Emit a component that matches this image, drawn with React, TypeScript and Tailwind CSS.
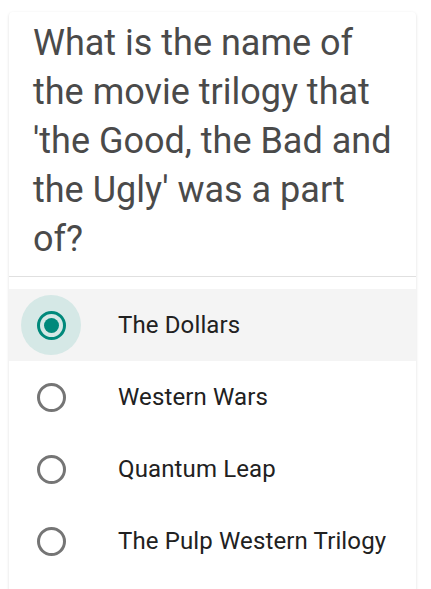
const options = ["The Dollars", "Western Wars", "Quantum Leap", "The Pulp Western Trilogy"];
const selected = 0;

function Radio({ checked }: { checked: boolean }) {
  return (
    <div
      className={`flex h-[60px] w-[60px] shrink-0 items-center justify-center rounded-full ${
        checked ? "bg-[#d5e8e6]" : ""
      }`}
    >
      <div
        className={`flex h-[29px] w-[29px] items-center justify-center rounded-full border-[3px] ${
          checked ? "border-[#00897b]" : "border-[#757575]"
        }`}
      >
        {checked && <div className="h-[15px] w-[15px] rounded-full bg-[#00897b]" />}
      </div>
    </div>
  );
}

export default function App() {
  return (
    <div className="h-[589px] overflow-hidden bg-white pt-3 font-['Roboto',sans-serif]">
      <div className="mx-[9px] w-[407px] rounded-[4px] bg-white shadow-[0_1px_3px_rgba(0,0,0,0.14)]">
        <div className="px-6 pt-[7px] pb-3 text-[36px] leading-[49px] text-[#4a4a4a]">
          What is the name of the movie trilogy that 'the Good, the Bad and the Ugly' was a part of?
        </div>
        <div className="border-t border-[#e0e0e0] pt-3 pb-10">
          {options.map((opt, i) => (
            <div
              key={opt}
              className={`flex h-[72px] items-center pl-3 ${i === selected ? "bg-[#f4f4f4]" : ""}`}
            >
              <Radio checked={i === selected} />
              <span className="ml-[37px] text-[24px] tracking-[0.13px] text-[#212121]">{opt}</span>
            </div>
          ))}
        </div>
      </div>
    </div>
  );
}
